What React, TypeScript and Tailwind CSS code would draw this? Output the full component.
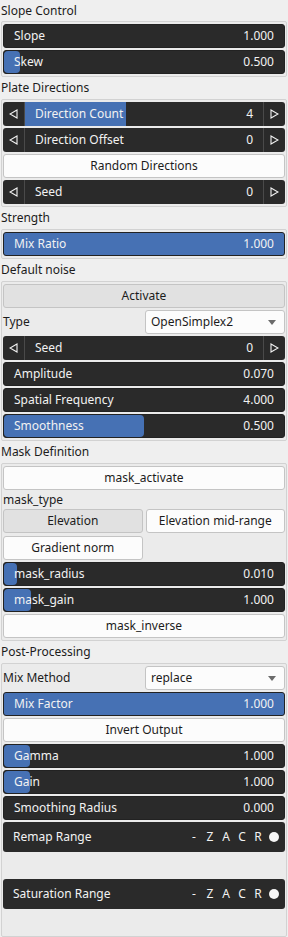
import React from "react";

const font = { fontFamily: '"Noto Sans", "Open Sans", sans-serif' };

function Title({ children, first = false }: { children: React.ReactNode; first?: boolean }) {
  return (
    <div className={`${first ? "h-[21px] leading-[21px]" : "h-[22px] leading-[22px]"} px-[1px] text-[12px] text-[#1c1c1c]`}>
      {children}
    </div>
  );
}

function Box({ children }: { children: React.ReactNode }) {
  return (
    <div className="mx-[1px] border border-[#d2d2d2] bg-[#ebebeb] p-[1px] py-[2px] flex flex-col gap-[2px] rounded-[2px]">
      {children}
    </div>
  );
}

function Arrow({ dir }: { dir: "l" | "r" }) {
  return (
    <svg width="9" height="10" viewBox="0 0 9 10">
      {dir === "l" ? (
        <polygon points="8,1 8,9 1,5" fill="none" stroke="#f2f2f2" strokeWidth="1.1" />
      ) : (
        <polygon points="1,1 1,9 8,5" fill="none" stroke="#f2f2f2" strokeWidth="1.1" />
      )}
    </svg>
  );
}

// fill: width of the blue part in px
function Slider({ label, value, fill = 0, arrows = false, full = false }: { label: string; value: string; fill?: number; arrows?: boolean; full?: boolean }) {
  if (arrows) {
    return (
      <div className="h-[24px] flex rounded-[3px] bg-[#2a2a2a] text-[12px] text-[#f2f2f2] overflow-hidden">
        <div className="w-[22px] flex items-center justify-center border-r border-[#4a4a4a]">
          <Arrow dir="l" />
        </div>
        <div className="relative flex-1 flex items-center justify-between pl-[10px] pr-[10px]">
          {fill > 0 && <div className="absolute left-0 inset-y-0 bg-[#4671b4]" style={{ width: fill }} />}
          <span className="relative">{label}</span>
          <span className="relative">{value}</span>
        </div>
        <div className="w-[22px] flex items-center justify-center border-l border-[#4a4a4a]">
          <Arrow dir="r" />
        </div>
      </div>
    );
  }
  return (
    <div className={`relative h-[24px] flex items-center justify-between px-[10px] rounded-[3px] border border-[#222] text-[12px] text-[#f2f2f2] overflow-hidden ${full ? "bg-[#4671b4]" : "bg-[#2a2a2a]"}`}>
      {fill > 0 && !full && <div className="absolute left-0 inset-y-0 rounded-[4px] bg-[#4671b4]" style={{ width: fill }} />}
      <span className="relative">{label}</span>
      <span className="relative">{value}</span>
    </div>
  );
}

function Button({ children, pressed = false, className = "" }: { children: React.ReactNode; pressed?: boolean; className?: string }) {
  return (
    <div className={`h-[24px] flex items-center justify-center rounded-[3px] border border-[#c4c4c4] text-[12px] text-[#1c1c1c] ${pressed ? "bg-[#e1e1e1]" : "bg-[#fcfcfc]"} ${className}`}>
      {children}
    </div>
  );
}

function Combo({ label, value }: { label: string; value: string }) {
  return (
    <div className="h-[24px] flex items-center text-[12px] text-[#1c1c1c]">
      <span className="flex-1">{label}</span>
      <div className="w-[140px] h-[24px] flex items-center justify-between pl-[5px] pr-[8px] rounded-[3px] border border-[#c4c4c4] bg-[#fcfcfc]">
        <span>{value}</span>
        <svg width="8" height="5" viewBox="0 0 8 5">
          <polygon points="0,0 8,0 4,5" fill="#6b6b6b" />
        </svg>
      </div>
    </div>
  );
}

function RangeRow({ label }: { label: string }) {
  return (
    <div className="flex flex-col gap-[2px]">
      <div className="h-[30px] flex items-center justify-between pl-[10px] pr-[6px] rounded-[3px] bg-[#2a2a2a] text-[12px] text-[#f2f2f2]">
        <span>{label}</span>
        <div className="flex items-center">
          {["-", "Z", "A", "C", "R"].map((c) => (
            <span key={c} className="w-[16px] text-center">{c}</span>
          ))}
          <span className="w-[10px] h-[10px] rounded-full bg-[#f5f5f5] ml-[3px]" />
        </div>
      </div>
      <div className="h-[23px]" />
    </div>
  );
}

export default function App() {
  return (
    <div className="w-[288px] h-[937px] bg-[#efefef] overflow-hidden" style={font}>
      <Title first>Slope Control</Title>
      <Box>
        <Slider label="Slope" value="1.000" />
        <Slider label="Skew" value="0.500" fill={16} />
      </Box>

      <Title>Plate Directions</Title>
      <Box>
        <Slider label="Direction Count" value="4" arrows fill={101} />
        <Slider label="Direction Offset" value="0" arrows />
        <Button>Random Directions</Button>
        <Slider label="Seed" value="0" arrows />
      </Box>

      <Title>Strength</Title>
      <Box>
        <Slider label="Mix Ratio" value="1.000" full />
      </Box>

      <Title>Default noise</Title>
      <Box>
        <Button pressed>Activate</Button>
        <Combo label="Type" value="OpenSimplex2" />
        <Slider label="Seed" value="0" arrows />
        <Slider label="Amplitude" value="0.070" />
        <Slider label="Spatial Frequency" value="4.000" />
        <Slider label="Smoothness" value="0.500" fill={140} />
      </Box>

      <Title>Mask Definition</Title>
      <Box>
        <Button>mask_activate</Button>
        <div className="h-[15px] leading-[15px] text-[12px] text-[#1c1c1c]">mask_type</div>
        <div className="grid grid-cols-2 gap-[3px]">
          <Button pressed>Elevation</Button>
          <Button>Elevation mid-range</Button>
          <Button>Gradient norm</Button>
        </div>
        <Slider label="mask_radius" value="0.010" fill={13} />
        <Slider label="mask_gain" value="1.000" fill={27} />
        <Button>mask_inverse</Button>
      </Box>

      <Title>Post-Processing</Title>
      <Box>
        <Combo label="Mix Method" value="replace" />
        <Slider label="Mix Factor" value="1.000" full />
        <Button>Invert Output</Button>
        <Slider label="Gamma" value="1.000" fill={26} />
        <Slider label="Gain" value="1.000" fill={26} />
        <Slider label="Smoothing Radius" value="0.000" />
        <RangeRow label="Remap Range" />
        <RangeRow label="Saturation Range" />
      </Box>
    </div>
  );
}
